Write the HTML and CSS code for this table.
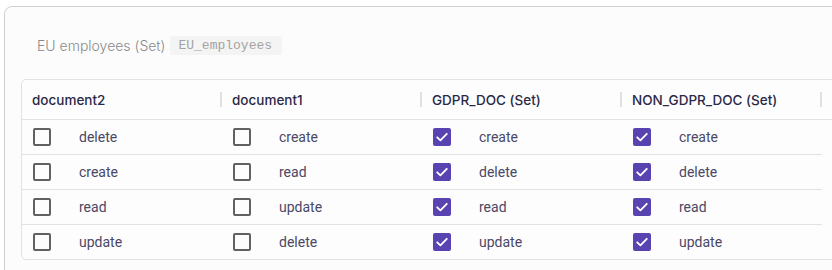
FILE: index.html
```html
<!DOCTYPE html>
<html lang="en">

<head>
    <meta charset="UTF-8">
    <meta name="viewport" content="width=device-width, initial-scale=1.0">
    <title>Permissions</title>
    <link rel="stylesheet" href="styles.css">
</head>

<body>

    <div class="card">
        <div class="card-title">
            <span class="set-name">EU employees (Set)</span>
            <code class="set-key">EU_employees</code>
        </div>

        <div class="table">
            <div class="table-head">
                <div class="head-cell">document2</div>
                <div class="head-cell">document1</div>
                <div class="head-cell">GDPR_DOC (Set)</div>
                <div class="head-cell">NON_GDPR_DOC (Set)</div>
            </div>
            <div class="table-body" id="tableBody"></div>
        </div>
    </div>

    <script>
        // actions per column, row by row
        const columns = [
            { checked: false, actions: ["delete", "create", "read", "update"] },
            { checked: false, actions: ["create", "read", "update", "delete"] },
            { checked: true, actions: ["create", "delete", "read", "update"] },
            { checked: true, actions: ["create", "delete", "read", "update"] }
        ];

        const checkSvg = '<svg viewBox="0 0 18 18" width="18" height="18"><path d="M4.2 9.3l3.2 3.1 6.4-6.6" fill="none" stroke="#fff" stroke-width="1.8" stroke-linecap="round" stroke-linejoin="round"/></svg>';

        const body = document.getElementById("tableBody");
        for (let r = 0; r < 4; r++) {
            const row = document.createElement("div");
            row.className = "row";
            columns.forEach(col => {
                const cell = document.createElement("div");
                cell.className = "cell";
                const box = document.createElement("span");
                box.className = col.checked ? "checkbox checked" : "checkbox";
                if (col.checked) box.innerHTML = checkSvg;
                const label = document.createElement("span");
                label.className = "action";
                label.textContent = col.actions[r];
                cell.appendChild(box);
                cell.appendChild(label);
                row.appendChild(cell);
            });
            body.appendChild(row);
        }
    </script>
</body>

</html>
```

FILE: styles.css
```css
body {
    font-family: Inter, "Noto Sans", sans-serif;
    background-color: #fff;
    margin: 0;
    padding: 0;
    overflow: hidden;
}

.card {
    margin: 6px 0 0 4px;
    width: 900px;
    height: 280px;
    background-color: #fcfcfc;
    border: 1px solid #cfcfcf;
    border-radius: 8px;
    padding: 0 16px;
}

.card-title {
    display: flex;
    align-items: center;
    gap: 5px;
    height: 28px;
    margin-top: 24px;
    padding-left: 16px;
}

.set-name {
    font-size: 14px;
    font-weight: 300;
    color: #8a8a8a;
}

.set-key {
    font-family: "Liberation Mono", monospace;
    font-size: 13px;
    color: #a3a3a3;
    background-color: #f4f4f4;
    padding: 2px 10px 2px 8px;
    border-radius: 2px;
}

.table {
    margin-top: 20px;
    border: 1px solid #e2e2e2;
    border-radius: 5px;
    background-color: #fdfdfd;
}

.table-head {
    display: flex;
    height: 39px;
    border-bottom: 1px solid #e2e2e2;
}

.head-cell {
    width: 200px;
    display: flex;
    align-items: center;
    padding-left: 10px;
    box-sizing: border-box;
    font-size: 13.5px;
    font-weight: 500;
    color: #2a2948;
    position: relative;
}

.head-cell::after {
    content: "";
    position: absolute;
    right: 0;
    top: 12px;
    width: 2px;
    height: 15px;
    background-color: #e0e0e0;
}

.table-body {
    width: 800px;
}

.row {
    display: flex;
    height: 35px;
    box-sizing: border-box;
    border-bottom: 1px solid #e2e2e2;
}

.row:last-child {
    border-bottom: none;
    height: 34px;
}

.cell {
    width: 200px;
    display: flex;
    align-items: center;
    padding-left: 11px;
    box-sizing: border-box;
}

.checkbox {
    width: 18px;
    height: 18px;
    box-sizing: border-box;
    border: 2px solid #616161;
    border-radius: 2px;
    flex-shrink: 0;
}

.checkbox.checked {
    border: none;
    background-color: #5943b0;
}

.checkbox svg {
    display: block;
}

.action {
    margin-left: 28px;
    font-family: Roboto, sans-serif;
    font-size: 14px;
    color: #4a4866;
}
```
